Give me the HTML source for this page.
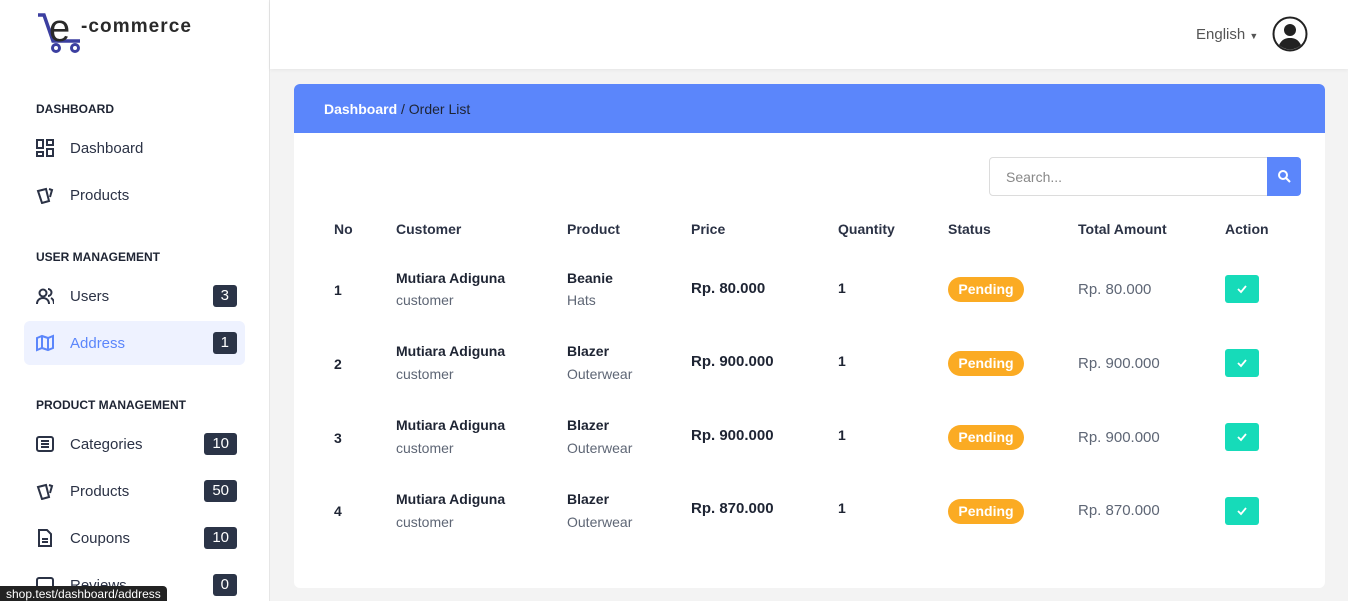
<!DOCTYPE html>
<html><head><meta charset="utf-8"><style>
*{box-sizing:border-box;margin:0;padding:0}
html,body{width:1348px;height:601px;overflow:hidden}
body{background:#f3f3f3;font-family:"Liberation Sans",sans-serif;color:#1e2433;position:relative}
.sb{position:absolute;left:0;top:0;width:270px;height:601px;background:#fff;border-right:1px solid #e6e6e6}
.hd{position:absolute;left:270px;top:0;right:0;height:69px;background:#fff;box-shadow:0 1px 4px rgba(0,0,0,.06)}
.sec{position:absolute;left:36px;font-size:12px;font-weight:bold;color:#1e2433}
.it{position:absolute;left:24px;width:221px;height:44px;border-radius:6px;font-size:15px;color:#2b3245}
.it svg{position:absolute;left:12px;top:13px}
.it span.t{position:absolute;left:46px;top:14px}
.bd{position:absolute;right:8px;top:11px;background:#2b3447;color:#fff;font-size:15px;height:22px;border-radius:3px;padding:2px 8px;line-height:18px}
.card{position:absolute;left:294px;top:84px;width:1031px;height:504px;background:#fff;border-radius:6px;overflow:hidden}
.ch{height:49px;background:#5b86fb;color:#1e2433;font-size:14px;padding:17px 30px}
.c{position:absolute;font-size:14px}
.th{top:137px;font-weight:bold;color:#2b3245;font-size:14px}
.b{font-weight:bold;color:#1e2433}
.g{color:#5e6675}
.pend{position:absolute;background:#fbab23;color:#fff;font-weight:bold;font-size:14px;border-radius:13px;width:76px;height:25px;text-align:center;line-height:25px}
.ok{position:absolute;background:#16dbb9;width:34px;height:28px;border-radius:3px}
</style></head><body>
<div class="sb">
<svg style="position:absolute;left:36px;top:12px" width="160" height="44"><path d="M2 3h6l9 26h27" stroke="#3c3fa0" stroke-width="3.5" fill="none"/><circle cx="20" cy="36" r="3.5" stroke="#3c3fa0" stroke-width="3" fill="none"/><circle cx="39" cy="36" r="3.5" stroke="#3c3fa0" stroke-width="3" fill="none"/><text x="13" y="29" font-size="38" font-family="Liberation Sans" fill="#2a2a2a">e</text><text x="45" y="20" font-size="19" font-family="Liberation Sans" font-weight="bold" fill="#2a2a2a" textLength="110">-commerce</text></svg>
<div class="sec" style="top:102px">DASHBOARD</div>
<div class="it" style="top:126px"><svg width="18" height="18" fill="none" stroke="#2b3245" stroke-width="2"><rect x="1" y="1" width="6" height="8"/><rect x="11" y="1" width="6" height="5"/><rect x="1" y="13" width="6" height="4"/><rect x="11" y="10" width="6" height="7"/></svg><span class="t">Dashboard</span></div>
<div class="it" style="top:173px"><svg width="18" height="18" fill="none" stroke="#2b3245" stroke-width="2"><path d="M2 5l8-2 3 12-7 2z M13 3l3 1-2 7"/></svg><span class="t">Products</span></div>
<div class="sec" style="top:250px">USER MANAGEMENT</div>
<div class="it" style="top:274px"><svg width="18" height="18" fill="none" stroke="#2b3245" stroke-width="2"><circle cx="7" cy="6" r="3.5"/><path d="M1 17c0-4 3-6 6-6s6 2 6 6M12 2a3 3 0 010 7M15 11c2 1 3 3 3 6"/></svg><span class="t">Users</span><span class="bd">3</span></div>
<div class="it" style="top:321px;background:#eef2ff;color:#5b86fb"><svg width="18" height="18" fill="none" stroke="#5b86fb" stroke-width="2"><path d="M1 4l5-2 6 2 5-2v12l-5 2-6-2-5 2zM6 2v12M12 4v12"/></svg><span class="t">Address</span><span class="bd">1</span></div>
<div class="sec" style="top:398px">PRODUCT MANAGEMENT</div>
<div class="it" style="top:422px"><svg width="18" height="18" fill="none" stroke="#2b3245" stroke-width="2"><rect x="1" y="2" width="16" height="14" rx="2"/><path d="M5 6h8M5 9h8M5 12h8"/></svg><span class="t">Categories</span><span class="bd">10</span></div>
<div class="it" style="top:469px"><svg width="18" height="18" fill="none" stroke="#2b3245" stroke-width="2"><path d="M2 5l8-2 3 12-7 2z M13 3l3 1-2 7"/></svg><span class="t">Products</span><span class="bd">50</span></div>
<div class="it" style="top:516px"><svg width="18" height="18" fill="none" stroke="#2b3245" stroke-width="2"><path d="M3 1h8l4 4v12H3zM6 10h6M6 13h6"/></svg><span class="t">Coupons</span><span class="bd">10</span></div>
<div class="it" style="top:563px"><svg width="18" height="18" fill="none" stroke="#2b3245" stroke-width="2"><rect x="1" y="2" width="16" height="12" rx="2"/></svg><span class="t">Reviews</span><span class="bd">0</span></div>
</div>
<div style="position:absolute;left:0;top:586px;background:#222;color:#fff;font-size:12px;padding:2px 6px;border-radius:0 4px 0 0;height:15px;line-height:13px">shop.test/dashboard/address</div>
<div class="hd">
<div style="position:absolute;left:926px;top:26px;font-size:15px;color:#555">English <span style="font-size:9px">▼</span></div>
<svg style="position:absolute;left:1002px;top:16px" width="36" height="36"><circle cx="18" cy="18" r="16.5" fill="#fff" stroke="#222" stroke-width="2"/><circle cx="18" cy="14" r="6" fill="#222"/><path d="M7 29c3-6 7-7 11-7s8 1 11 7a16 16 0 01-22 0z" fill="#222"/></svg>
</div>
<div class="card">
<div class="ch"><b style="color:#fff">Dashboard</b> / Order List</div>
<div style="position:absolute;left:695px;top:73px;width:279px;height:39px;border:1px solid #dcdcdc;border-radius:4px 0 0 4px;font-size:14px;color:#888;padding:11px 16px">Search...</div>
<div style="position:absolute;left:973px;top:73px;width:34px;height:39px;background:#5b86fb;border-radius:0 4px 4px 0"><svg style="position:absolute;left:11px;top:13px" width="13" height="13" fill="none" stroke="#fff" stroke-width="2"><circle cx="5" cy="5" r="4"/><path d="M8 8l4 4"/></svg></div>
<div class="c th" style="left:40px">No</div><div class="c th" style="left:102px">Customer</div><div class="c th" style="left:273px">Product</div><div class="c th" style="left:397px">Price</div><div class="c th" style="left:544px">Quantity</div><div class="c th" style="left:654px">Status</div><div class="c th" style="left:784px">Total Amount</div><div class="c th" style="left:931px">Action</div>
<div class="c b" style="left:40px;top:198px">1</div><div class="c b" style="left:102px;top:186px">Mutiara Adiguna</div><div class="c g" style="left:102px;top:208px">customer</div><div class="c b" style="left:273px;top:186px">Beanie</div><div class="c g" style="left:273px;top:208px">Hats</div><div class="c b" style="left:397px;top:196px;font-size:15px">Rp. 80.000</div><div class="c b" style="left:544px;top:196px">1</div><div class="pend" style="left:654px;top:193px">Pending</div><div class="c g" style="left:784px;top:197px;font-size:15px">Rp. 80.000</div><div class="ok" style="left:931px;top:191px"><svg width="34" height="28"><path d="M13 14l3 3 5-6" stroke="#fff" stroke-width="1.8" fill="none"/></svg></div>
<div class="c b" style="left:40px;top:272px">2</div><div class="c b" style="left:102px;top:259px">Mutiara Adiguna</div><div class="c g" style="left:102px;top:282px">customer</div><div class="c b" style="left:273px;top:259px">Blazer</div><div class="c g" style="left:273px;top:282px">Outerwear</div><div class="c b" style="left:397px;top:269px;font-size:15px">Rp. 900.000</div><div class="c b" style="left:544px;top:269px">1</div><div class="pend" style="left:654px;top:267px">Pending</div><div class="c g" style="left:784px;top:271px;font-size:15px">Rp. 900.000</div><div class="ok" style="left:931px;top:265px"><svg width="34" height="28"><path d="M13 14l3 3 5-6" stroke="#fff" stroke-width="1.8" fill="none"/></svg></div>
<div class="c b" style="left:40px;top:346px">3</div><div class="c b" style="left:102px;top:333px">Mutiara Adiguna</div><div class="c g" style="left:102px;top:356px">customer</div><div class="c b" style="left:273px;top:333px">Blazer</div><div class="c g" style="left:273px;top:356px">Outerwear</div><div class="c b" style="left:397px;top:343px;font-size:15px">Rp. 900.000</div><div class="c b" style="left:544px;top:343px">1</div><div class="pend" style="left:654px;top:341px">Pending</div><div class="c g" style="left:784px;top:345px;font-size:15px">Rp. 900.000</div><div class="ok" style="left:931px;top:339px"><svg width="34" height="28"><path d="M13 14l3 3 5-6" stroke="#fff" stroke-width="1.8" fill="none"/></svg></div>
<div class="c b" style="left:40px;top:419px">4</div><div class="c b" style="left:102px;top:407px">Mutiara Adiguna</div><div class="c g" style="left:102px;top:430px">customer</div><div class="c b" style="left:273px;top:407px">Blazer</div><div class="c g" style="left:273px;top:430px">Outerwear</div><div class="c b" style="left:397px;top:416px;font-size:15px">Rp. 870.000</div><div class="c b" style="left:544px;top:416px">1</div><div class="pend" style="left:654px;top:415px">Pending</div><div class="c g" style="left:784px;top:418px;font-size:15px">Rp. 870.000</div><div class="ok" style="left:931px;top:413px"><svg width="34" height="28"><path d="M13 14l3 3 5-6" stroke="#fff" stroke-width="1.8" fill="none"/></svg></div>
</div>
</body></html>
